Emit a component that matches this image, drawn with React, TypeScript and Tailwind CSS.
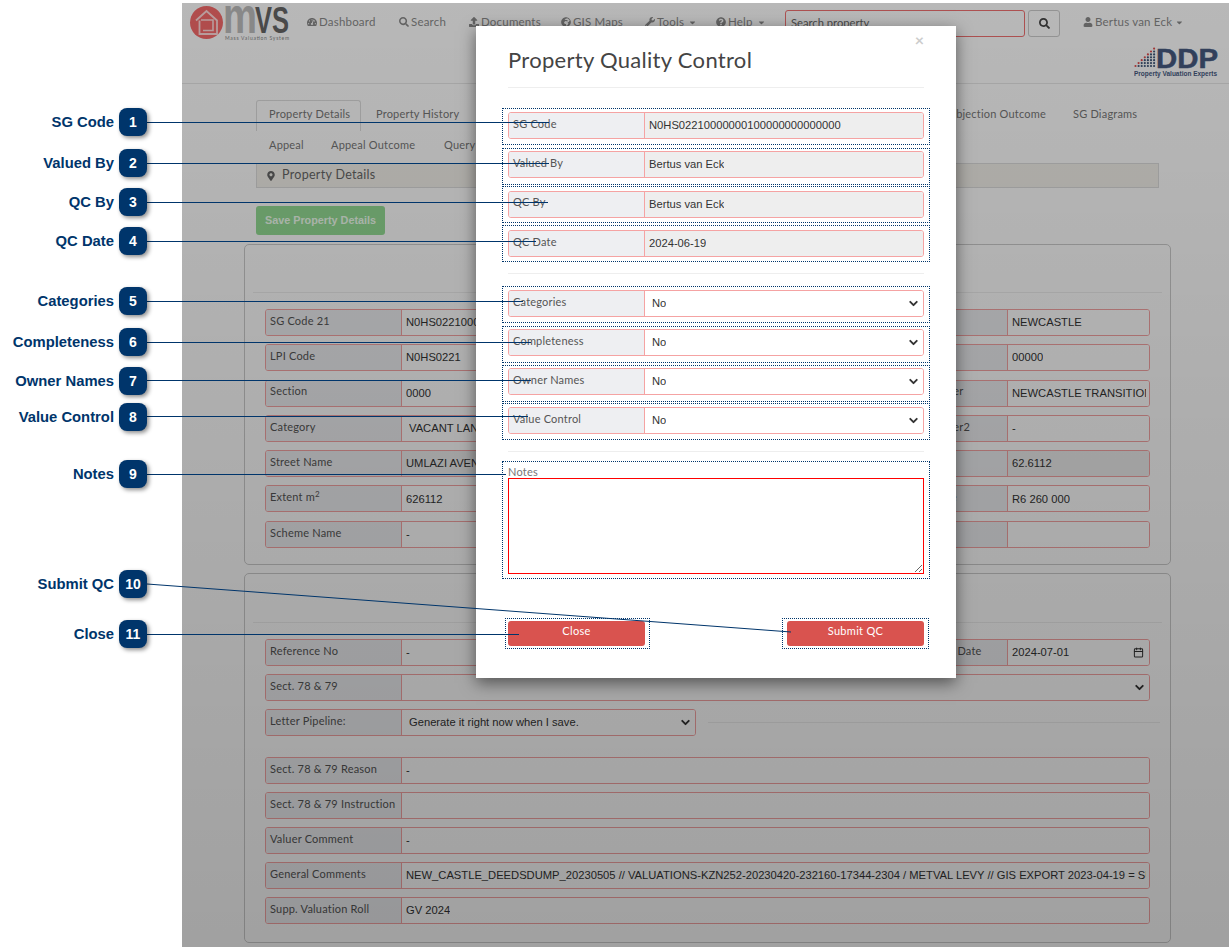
import { Calendar, ChevronDown } from "lucide-react";
import {
  FaGlobeAfrica,
  FaMapMarkerAlt,
  FaQuestionCircle,
  FaSearch,
  FaTachometerAlt,
  FaUpload,
  FaUser,
  FaWrench,
  FaCaretDown,
} from "react-icons/fa";

const arial = "font-['Liberation_Sans',Arial,sans-serif]";

function MvsLogo() {
  return (
    <svg width="104" height="36" viewBox="0 0 104 36" className="block">
      <circle cx="17.5" cy="16.5" r="16.5" fill="#f56a6a" />
      <path d="M7 14.5 L17.5 5 L28 14.5 V28 H10.5 V14.5" fill="none" stroke="#ffd9d9" strokeWidth="1.8" />
      <path d="M12 14 H24 V24.5 H14" fill="none" stroke="#ffd9d9" strokeWidth="1.6" />
      <text x="34" y="27" fontFamily="Liberation Sans" fontWeight="700" fontSize="50" textLength="34" lengthAdjust="spacingAndGlyphs" fill="#bdbdbd">
        m
      </text>
      <text x="66" y="27" fontFamily="Liberation Sans" fontWeight="700" fontSize="37" textLength="34" lengthAdjust="spacingAndGlyphs" fill="#666">
        VS
      </text>
      <text x="36" y="34" fontFamily="Lato" fontSize="5" textLength="64" fill="#888">
        Mass Valuation System
      </text>
    </svg>
  );
}

function DdpLogo() {
  const dots = [];
  for (let col = 0; col < 7; col++) {
    const rows = col + 1;
    for (let row = 0; row < rows; row++) {
      dots.push(
        <circle
          key={`${col}-${row}`}
          cx={1.5 + col * 3.1}
          cy={19 - row * 2.9}
          r="1.1"
          fill={row === rows - 1 ? "#e04b4b" : "#3f5678"}
        />
      );
    }
  }
  return (
    <svg width="84" height="31" viewBox="0 0 84 31" className="block">
      {dots}
      <text x="22" y="21" fontFamily="Liberation Sans" fontWeight="700" fontSize="27" textLength="62" lengthAdjust="spacingAndGlyphs" fill="#46597f" stroke="#46597f" strokeWidth="0.5">
        DDP
      </text>
      <text x="0" y="29" fontFamily="Liberation Sans" fontWeight="700" fontSize="8" textLength="83" lengthAdjust="spacingAndGlyphs" fill="#46597f">
        Property Valuation Experts
      </text>
    </svg>
  );
}

function NavLink({
  icon,
  label,
  width,
  caret,
}: {
  icon: React.ReactNode;
  label: string;
  width: string;
  caret?: boolean;
}) {
  return (
    <div className={`flex h-[16px] items-center gap-[2px] whitespace-nowrap text-[11.5px] tracking-[0.2px] text-[#8a8a8a] ${width}`}>
      <span className="text-[10px]">{icon}</span>
      <span>{label}</span>
      {caret && <FaCaretDown className="ml-[2px] text-[9px]" />}
    </div>
  );
}

function Field({
  label,
  value,
  width = "w-[300px]",
  labelWidth = "w-[136px]",
  filled,
  select,
  trailing,
  valueClass = "pl-[4px]",
}: {
  label: React.ReactNode;
  value?: string;
  width?: string;
  labelWidth?: string;
  filled?: boolean;
  select?: boolean;
  trailing?: React.ReactNode;
  valueClass?: string;
}) {
  return (
    <div className={`flex h-[27px] shrink-0 overflow-hidden rounded-[3px] border border-[#f5a3a3] ${width}`}>
      <div className={`flex shrink-0 items-center border-r border-[#f5a3a3] bg-[#eeeff2] pb-[3px] pl-[4px] text-[11px] tracking-[0.2px] text-[#555] ${labelWidth}`}>
        <span className="whitespace-nowrap">{label}</span>
      </div>
      <div className={`flex min-w-0 flex-1 items-center justify-between gap-[4px] overflow-hidden whitespace-nowrap pr-[3px] text-[11.2px] text-[#333] ${arial} ${valueClass} ${filled ? "bg-[#eeeeee]" : "bg-white"}`}>
        <span className="min-w-0 overflow-hidden">{value}</span>
        {select && <ChevronDown size={13} strokeWidth={3.5} className="shrink-0 text-[#333]" />}
        {trailing}
      </div>
    </div>
  );
}

function Hr({ className = "" }: { className?: string }) {
  return <div className={`h-px bg-[#eeeeee] ${className}`} />;
}

function RightField(props: { label: string; value?: string; filled?: boolean }) {
  return <Field {...props} width="w-[226px]" labelWidth="w-[83px]" />;
}

function PropertyPage() {
  return (
    <div className="ml-[182px] mt-[3px] h-[944px] w-[1047px] overflow-hidden bg-white font-[Lato,sans-serif]">
      <div className="h-[81px] border-b border-[#e7e7e7]">
        <div className="flex h-[34px] items-start">
          <div className="ml-[7px] mt-[3px] w-[118px]">
            <MvsLogo />
          </div>
          <div className="flex items-center pt-[11px]">
            <NavLink icon={<FaTachometerAlt />} label="Dashboard" width="w-[92px]" />
            <NavLink icon={<FaSearch />} label="Search" width="w-[70px]" />
            <NavLink icon={<FaUpload />} label="Documents" width="w-[92px]" />
            <NavLink icon={<FaGlobeAfrica />} label="GIS Maps" width="w-[84px]" />
            <NavLink icon={<FaWrench />} label="Tools" width="w-[71px]" caret />
            <NavLink icon={<FaQuestionCircle />} label="Help" width="w-[69px]" caret />
          </div>
          <div className="mt-[7px] flex h-[27px] w-[240px] items-center rounded-[3px] border border-[#f07070] pl-[5px] text-[11.2px] text-[#666]">
            Search property
          </div>
          <div className="ml-[3px] mt-[7px] flex h-[27px] w-[32px] items-center justify-center rounded-[3px] border border-[#ccc] text-[11px] text-[#444]">
            <FaSearch />
          </div>
          <div className="ml-[23px] mt-[4px] pt-[7px]">
            <NavLink icon={<FaUser />} label="Bertus van Eck" width="w-[100px]" caret />
          </div>
        </div>
        <div className="mr-[11px] mt-[10px] flex justify-end">
          <DdpLogo />
        </div>
      </div>

      <div className="ml-[74px] w-[903px] pt-[16px] text-[11px] tracking-[0.2px] text-[#777]">
        <div className="flex h-[31px] items-center">
          <div className="flex h-[31px] w-[105px] items-center rounded-t-[3px] border border-b-0 border-[#ddd] pb-[3px] pl-[12px]">
            Property Details
          </div>
          <div className="ml-[15px] w-[350px] pb-[3px]">Property History</div>
          <div className="w-[320px] pb-[3px] text-right">Objection Outcome</div>
          <div className="ml-[27px] pb-[3px]">SG Diagrams</div>
        </div>
        <div className="flex h-[32px] items-center pb-[4px] pl-[13px]">
          <div className="w-[62px]">Appeal</div>
          <div className="w-[113px]">Appeal Outcome</div>
          <div>Query</div>
        </div>
        <div className="flex h-[25px] items-center gap-[6px] border border-[#ddd] bg-[#f4f2ec] pl-[9px] text-[12.5px] tracking-[0.3px] text-[#666]">
          <FaMapMarkerAlt className="text-[10px]" />
          Property Details
        </div>
        <div className={`mt-[18px] flex h-[29px] w-[129px] items-center justify-center rounded-[3px] bg-[#94dc94] text-[10.8px] font-bold tracking-normal text-[#f0fff0] ${arial}`}>
          Save Property Details
        </div>
      </div>

      <div className="ml-[62px] mt-[9px] h-[321px] w-[927px] rounded-[5px] border border-[#ccc]">
        <Hr className="mx-[8px] mt-[47px]" />
        <div className="mt-[16px] flex justify-between pl-[20px] pr-[20px]">
          <div className="flex flex-col gap-[8.3px]">
            <Field label="SG Code 21" value="N0HS02210000000100000000000000" />
            <Field label="LPI Code" value="N0HS0221" />
            <Field label="Section" value="0000" />
            <Field label="Category" value="VACANT LAND" valueClass="pl-[7px]" select />
            <Field label="Street Name" value="UMLAZI AVENUE" filled />
            <Field label={<>Extent m<sup className="text-[8px]">2</sup></>} value="626112" />
            <Field label="Scheme Name" value="-" />
          </div>
          <div className="flex flex-col gap-[8.3px]">
            <RightField label="Town" value="NEWCASTLE" />
            <RightField label="Ext" value="00000" />
            <RightField label="Owner" value="NEWCASTLE TRANSITIONAL" />
            <RightField label="Owner2" value="-" />
            <RightField label="Ha" value="62.6112" filled />
            <RightField label="Value" value="R6 260 000" />
            <RightField label="Ref" />
          </div>
        </div>
      </div>

      <div className="ml-[62px] mt-[8px] h-[370px] w-[927px] rounded-[5px] border border-[#ccc]">
        <Hr className="mx-[8px] mt-[48px]" />
        <div className="mt-[16px] flex flex-col pl-[20px]">
          <div className="flex w-[885px] justify-between">
            <Field label="Reference No" value="-" />
            <Field
              label="Issue Date"
              value="2024-07-01"
              width="w-[226px]"
              labelWidth="w-[83px]"
              trailing={<Calendar size={11} strokeWidth={2.2} className="mr-[2px] shrink-0 text-[#333]" />}
            />
          </div>
          <div className="mt-[8px]">
            <Field label="Sect. 78 & 79" width="w-[885px]" select />
          </div>
          <div className="mt-[8px] flex items-center">
            <Field label="Letter Pipeline:" value="Generate it right now when I save." width="w-[431px]" valueClass="pl-[7px]" select />
            <Hr className="ml-[12px] w-[452px]" />
          </div>
          <div className="mt-[21px] flex flex-col gap-[8px]">
            <Field label="Sect. 78 & 79 Reason" value="-" width="w-[885px]" />
            <Field label="Sect. 78 & 79 Instruction" width="w-[885px]" />
            <Field label="Valuer Comment" value="-" width="w-[885px]" />
            <Field
              label="General Comments"
              value="NEW_CASTLE_DEEDSDUMP_20230505 // VALUATIONS-KZN252-20230420-232160-17344-2304 / METVAL LEVY // GIS EXPORT 2023-04-19 = SUCCESS"
              width="w-[885px]"
            />
            <Field label="Supp. Valuation Roll" value="GV 2024" width="w-[885px]" />
          </div>
        </div>
      </div>
    </div>
  );
}

function QcModal() {
  return (
    <div className="absolute left-[476px] top-[26px] h-[652px] w-[480px] bg-white px-[32px] font-[Lato,sans-serif] shadow-[0_5px_15px_rgba(0,0,0,0.5)]">
      <div className="absolute right-[32px] top-[2px] text-[16px] font-bold text-[#ccc]">×</div>
      <div className="flex h-[62px] items-center border-b border-[#eeeeee] pt-[5px] text-[22px] tracking-[0.3px] text-[#444]">
        Property Quality Control
      </div>
      <div className="mt-[24px] flex flex-col gap-[12.3px]">
        <Field label="SG Code" value="N0HS02210000000100000000000000" width="w-[416px]" filled />
        <Field label="Valued By" value="Bertus van Eck" width="w-[416px]" filled />
        <Field label="QC By" value="Bertus van Eck" width="w-[416px]" filled />
        <Field label="QC Date" value="2024-06-19" width="w-[416px]" filled />
      </div>
      <Hr className="mt-[16px]" />
      <div className="mt-[16px] flex flex-col gap-[12px]">
        <Field label="Categories" value="No" width="w-[416px]" valueClass="pl-[7px]" select />
        <Field label="Completeness" value="No" width="w-[416px]" valueClass="pl-[7px]" select />
        <Field label="Owner Names" value="No" width="w-[416px]" valueClass="pl-[7px]" select />
        <Field label="Value Control" value="No" width="w-[416px]" valueClass="pl-[7px]" select />
      </div>
      <Hr className="mt-[17px]" />
      <div className="mt-[13px] h-[13px] text-[11px] leading-[13px] tracking-[0.2px] text-[#777]">Notes</div>
      <textarea className="block h-[96px] w-[416px] border border-[#ff0000] bg-white outline-none" readOnly />
      <div className="mt-[47px] flex justify-between">
        <div className="flex h-[25px] w-[137px] items-center justify-center rounded-[3px] bg-[#d9534f] pb-[5px] text-[11px] tracking-[0.3px] text-white">
          Close
        </div>
        <div className="flex h-[25px] w-[137px] items-center justify-center rounded-[3px] bg-[#d9534f] pb-[5px] text-[11px] tracking-[0.3px] text-white">
          Submit QC
        </div>
      </div>
    </div>
  );
}

const callouts = [
  { n: 1, label: "SG Code", top: "top-[108px]" },
  { n: 2, label: "Valued By", top: "top-[149px]" },
  { n: 3, label: "QC By", top: "top-[188px]" },
  { n: 4, label: "QC Date", top: "top-[227px]" },
  { n: 5, label: "Categories", top: "top-[287px]" },
  { n: 6, label: "Completeness", top: "top-[328px]" },
  { n: 7, label: "Owner Names", top: "top-[367px]" },
  { n: 8, label: "Value Control", top: "top-[403px]" },
  { n: 9, label: "Notes", top: "top-[460px]" },
  { n: 10, label: "Submit QC", top: "top-[570px]" },
  { n: 11, label: "Close", top: "top-[620px]" },
];

const frames = [
  "left-[502px] top-[108px] h-[37px] w-[428px]",
  "left-[502px] top-[148px] h-[37px] w-[428px]",
  "left-[502px] top-[186px] h-[37px] w-[428px]",
  "left-[502px] top-[225px] h-[37px] w-[428px]",
  "left-[502px] top-[286px] h-[37px] w-[428px]",
  "left-[502px] top-[326px] h-[37px] w-[428px]",
  "left-[502px] top-[365px] h-[37px] w-[428px]",
  "left-[502px] top-[403px] h-[37px] w-[428px]",
  "left-[502px] top-[461px] h-[118px] w-[428px]",
  "left-[505px] top-[618px] h-[31px] w-[145px]",
  "left-[782px] top-[618px] h-[31px] w-[147px]",
];

const leaders = [
  [147, 122.5, 549, 122.5],
  [147, 163.5, 549, 163.5],
  [147, 202.5, 548, 202.5],
  [147, 241.5, 536, 241.5],
  [147, 301.5, 523, 301.5],
  [147, 342.5, 531, 342.5],
  [147, 380.5, 531, 380.5],
  [147, 416.5, 528, 416.5],
  [147, 474.5, 506, 474.5],
  [147, 584, 791, 632],
  [147, 634.5, 519, 634.5],
];

function Annotations() {
  return (
    <>
      {frames.map((frame) => (
        <div key={frame} className={`absolute border border-dotted border-[#00356b] ${frame}`} />
      ))}
      <svg width="1232" height="950" className="absolute left-0 top-0">
        {leaders.map(([x1, y1, x2, y2]) => (
          <line key={y1} x1={x1} y1={y1} x2={x2} y2={y2} stroke="#00356b" strokeWidth="1" />
        ))}
      </svg>
      {callouts.map((c) => (
        <div key={c.n} className={`absolute left-0 flex w-[147px] items-center justify-end gap-[5px] ${c.top} ${arial}`}>
          <span className="whitespace-nowrap text-[14.8px] font-bold text-[#00356b]">{c.label}</span>
          <span className="flex h-[28px] w-[28px] shrink-0 items-center justify-center rounded-[8px] bg-[#00356b] text-[14px] font-bold text-white shadow-[2px_2px_4px_rgba(0,0,0,0.45)]">
            {c.n}
          </span>
        </div>
      ))}
    </>
  );
}

export default function App() {
  return (
    <div className="relative h-[950px] w-[1232px] overflow-hidden bg-white">
      <PropertyPage />
      {/* modal backdrop, gets a bit darker towards the bottom */}
      <div className="absolute left-[182px] top-[3px] h-[944px] w-[1047px] bg-gradient-to-b from-black/[0.28] to-black/[0.37]" />
      <QcModal />
      <Annotations />
    </div>
  );
}
